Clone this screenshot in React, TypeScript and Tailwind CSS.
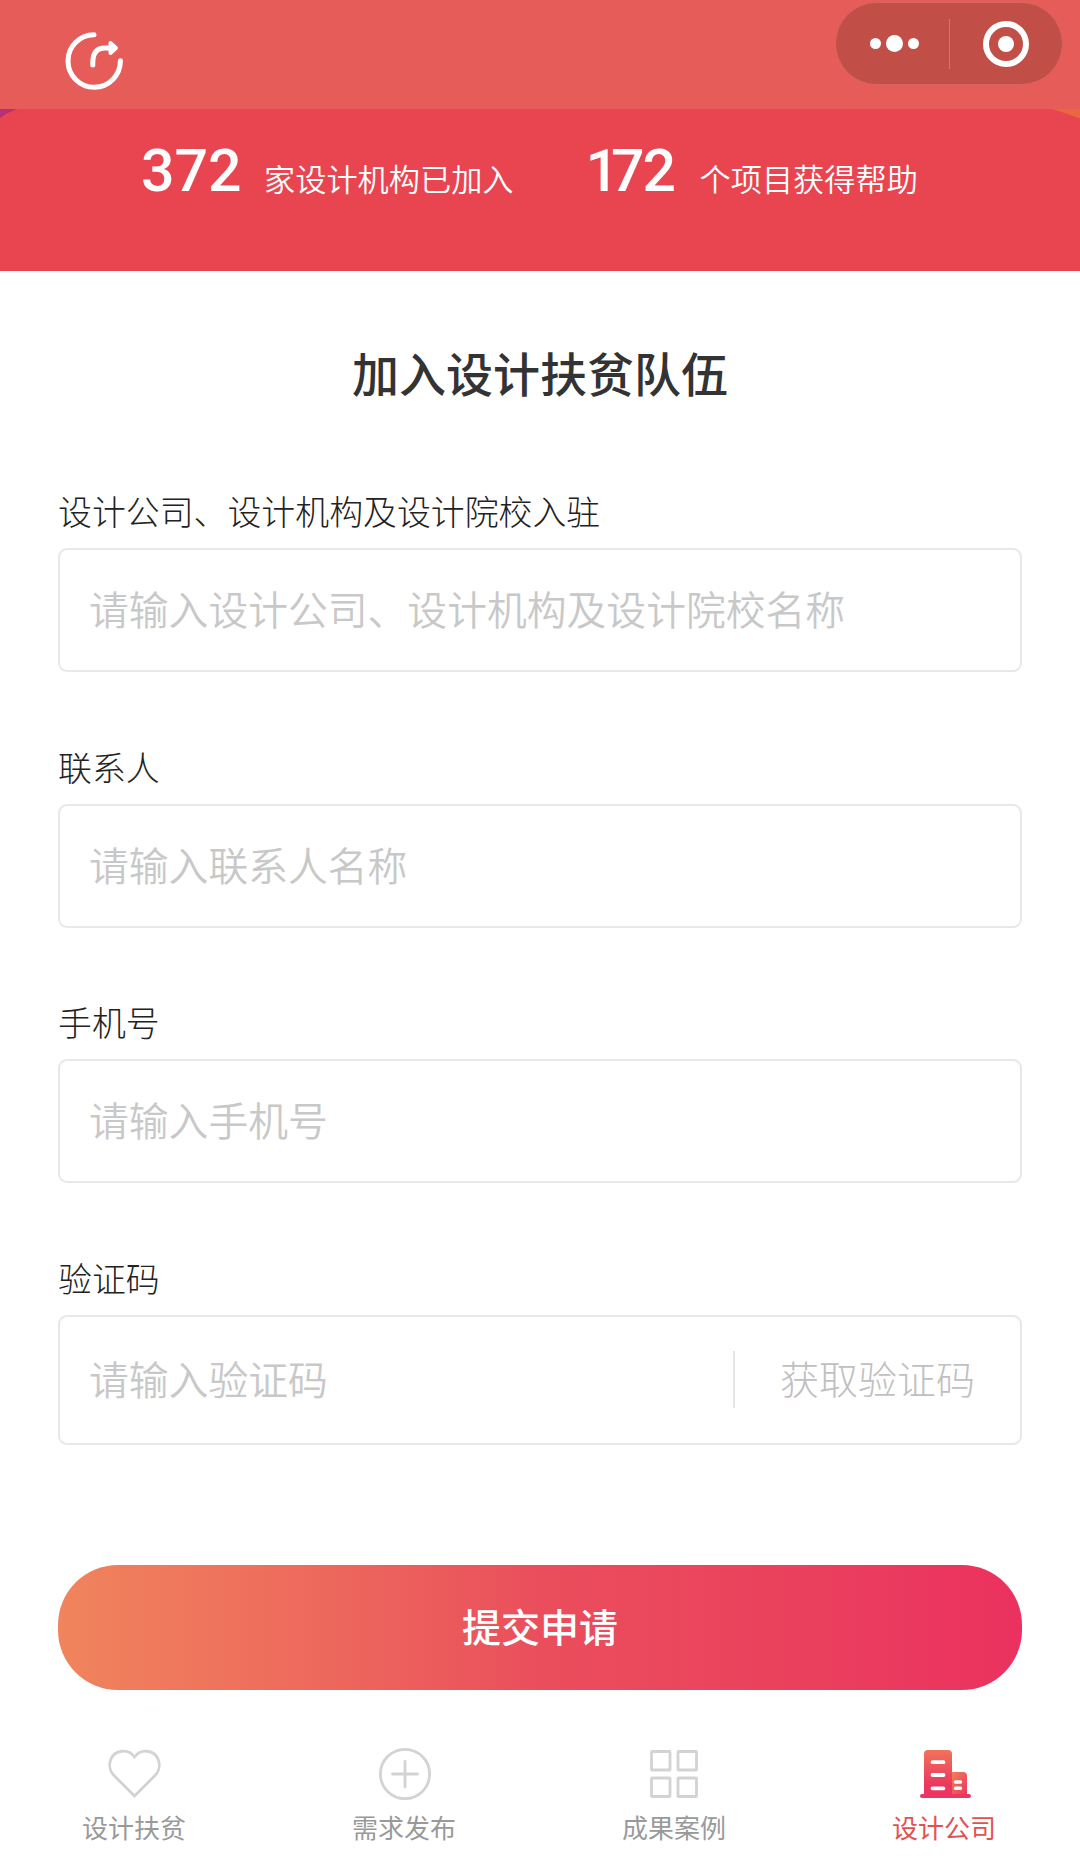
import type { ReactNode } from "react";

const fields = [
  { label: "设计公司、设计机构及设计院校入驻", placeholder: "请输入设计公司、设计机构及设计院校名称" },
  { label: "联系人", placeholder: "请输入联系人名称" },
  { label: "手机号", placeholder: "请输入手机号" },
];

const inputClass =
  "min-w-0 flex-1 bg-transparent pb-[4px] text-[39.8px] leading-[56px] font-[350] text-[#333] outline-none placeholder:text-[#c8c8c8] placeholder:opacity-100";

const labelClass = "block h-[58px] text-[33.9px] leading-[42px] font-light text-[#222]";

function RestartIcon() {
  return (
    <svg className="h-[60px] w-[60px]" viewBox="0 0 60 60" fill="none" stroke="#fff" strokeWidth="5" strokeLinecap="round">
      <path d="M30 3.8 A26.2 26.2 0 1 0 56.4 29.8" />
      <path d="M28.8 34 V31 Q29 17 41 17 H47" />
      <path d="M46.500 12 L52 17 L46.500 22 Z" fill="#fff" strokeWidth="4" strokeLinejoin="round" />
    </svg>
  );
}

function Header() {
  return (
    <header className="flex h-[109px] items-start justify-between bg-[#e65c58] pl-16 pr-[17px]">
      <button className="mt-[31px]" aria-label="restart">
        <RestartIcon />
      </button>
      <div className="mt-[2px] flex h-[83px] w-[228px] items-center rounded-full border border-[#d66662] bg-[#c24e48]">
        <div className="flex w-[113px] items-center justify-center gap-[5px] pl-[4px]">
          <span className="size-[11px] rounded-full bg-white" />
          <span className="size-[17px] rounded-full bg-white" />
          <span className="size-[11px] rounded-full bg-white" />
        </div>
        <span className="h-[50px] w-px bg-[#d67470]" />
        <div className="flex flex-1 items-center justify-center">
          <span className="flex size-[46px] items-center justify-center rounded-full border-[6px] border-white">
            <span className="size-4 rounded-full bg-white" />
          </span>
        </div>
      </div>
    </header>
  );
}

function Stat({ value, text, tight }: { value: string; text: string; tight?: boolean }) {
  return (
    <div className="flex items-baseline">
      <span
        className={
          tight
            ? "w-[90px] font-[Roboto] text-[59px] leading-[70px] font-medium tracking-[-2px]"
            : "w-[99px] font-[Roboto] text-[59px] leading-[70px] font-medium"
        }
      >
        <span className={tight ? "tracking-[-8px]" : ""}>{value[0]}</span>
        {value.slice(1)}
      </span>
      <span className="ml-[24px] text-[31.2px] font-[350]">{text}</span>
    </div>
  );
}

function Hero() {
  return (
    <section className="relative h-[162px] bg-[#e94550] text-white">
      <svg className="absolute left-0 top-0 h-[10px] w-[17px]" viewBox="0 0 17 10">
        <path d="M0 0H17Q8 3 0 9Z" fill="#b63078" />
      </svg>
      <svg className="absolute right-0 top-0 h-[10px] w-[28px]" viewBox="0 0 28 10">
        <path d="M0 0H28V9.5Q14 4 0 0Z" fill="#e9683f" />
      </svg>
      <div className="flex gap-[72px] pl-[141px] pt-[27px]">
        <Stat value="372" text="家设计机构已加入" />
        <Stat value="172" text="个项目获得帮助" tight />
      </div>
    </section>
  );
}

function Tab({ label, active, children }: { label: string; active?: boolean; children: ReactNode }) {
  return (
    <a className="flex flex-1 flex-col items-center">
      <svg className="size-[56px]" viewBox="0 0 56 56" fill="none" stroke="#d3d3d3" strokeWidth="2.8">
        {children}
      </svg>
      <span className={active ? "mt-[7px] text-[26px] leading-[36px] text-[#e3514f]" : "mt-[7px] text-[26px] leading-[36px] text-[#999]"}>
        {label}
      </span>
    </a>
  );
}

function TabBar() {
  return (
    <nav className="mt-[56px] -ml-px flex w-[1080px]">
      <Tab label="设计扶贫">
        <path d="M28.500 50 L7.500 29 C3.500 24.5 2.900 18 5 13 C8.500 4.5 21.500 1.5 28.500 11 C35.500 1.5 48.500 4.5 52 13 C54.100 18 53.500 24.5 49.500 29 Z" />
      </Tab>
      <Tab label="需求发布">
        <circle cx="29" cy="28" r="24.6" />
        <path d="M29 15.5V41M16.5 28H41.5" strokeLinecap="round" />
      </Tab>
      <Tab label="成果案例">
        <rect x="5.5" y="5.5" width="18.5" height="18.5" rx="0.5" />
        <rect x="32" y="5.5" width="18.5" height="18.5" rx="0.5" />
        <rect x="5.5" y="32" width="18.5" height="18.5" rx="0.5" />
        <rect x="32" y="32" width="18.5" height="18.5" rx="0.5" />
      </Tab>
      <Tab label="设计公司" active>
        <defs>
          <linearGradient id="building" x1="0" y1="0" x2="0" y2="1">
            <stop offset="0" stopColor="#f0735a" />
            <stop offset="0.75" stopColor="#ec3560" />
            <stop offset="1" stopColor="#ec3560" />
          </linearGradient>
          <linearGradient id="annex" x1="0" y1="0" x2="1" y2="1">
            <stop offset="0" stopColor="#ef8156" />
            <stop offset="1" stopColor="#ec3560" />
          </linearGradient>
        </defs>
        <g transform="translate(1 0)">
          <path d="M35 26H46Q50 26 50 30V49H35Z" fill="url(#annex)" stroke="none" />
          <path d="M4.5 48H7V8Q7 4 11 4H31Q35 4 35 8V48H52Q54 48 54 50Q54 52 52 52H5Q3 52 3 50Q3 48 5 48Z" fill="url(#building)" stroke="none" />
          <path d="M15.5 16.2H26.5M15.5 29H26.5M15.5 42.3H26.5" stroke="#fff" strokeWidth="3.8" strokeLinecap="round" />
          <path d="M38.5 36H43.5M38.5 42.3H43.5" stroke="#fff" strokeWidth="3.4" strokeLinecap="round" />
        </g>
      </Tab>
    </nav>
  );
}

export default function App() {
  return (
    <div className="h-[1859px] w-[1080px] overflow-hidden bg-white font-['Noto_Sans_CJK_SC',sans-serif]">
      <Header />
      <Hero />
      <main className="px-[58px] pt-[67px]">
        <h1 className="text-center text-[47px] leading-[68px] font-medium text-[#333]">加入设计扶贫队伍</h1>
        <form className="pt-[84px]">
          {fields.map((f) => (
            <label key={f.label} className="mb-[73.6px] block">
              <span className={labelClass}>{f.label}</span>
              <span className="flex h-[124px] items-center rounded-[9px] border-2 border-[#e8e8e8] px-[29px]">
                <input className={inputClass} placeholder={f.placeholder} />
              </span>
            </label>
          ))}
          <label className="block">
            <span className={labelClass}>验证码</span>
            <span className="flex h-[130px] items-center rounded-[9px] border-2 border-[#e8e8e8] pl-[29px] pr-[45px]">
              <input className={inputClass} placeholder="请输入验证码" />
              <span className="h-[57px] w-[2px] bg-[#e5e5e5]" />
              <span className="ml-[45px] pb-[5px] text-[39px] leading-[56px] font-light text-[#c0c0c0]">获取验证码</span>
            </span>
          </label>
          <button
            type="button"
            className="mt-[120px] flex h-[125px] w-full items-center justify-center rounded-[60px] bg-linear-to-r from-[#f0845c] via-[#ea4e5c] to-[#eb315f] pb-[4px] text-[39px] font-medium text-white"
          >
            提交申请
          </button>
        </form>
      </main>
      <TabBar />
    </div>
  );
}
